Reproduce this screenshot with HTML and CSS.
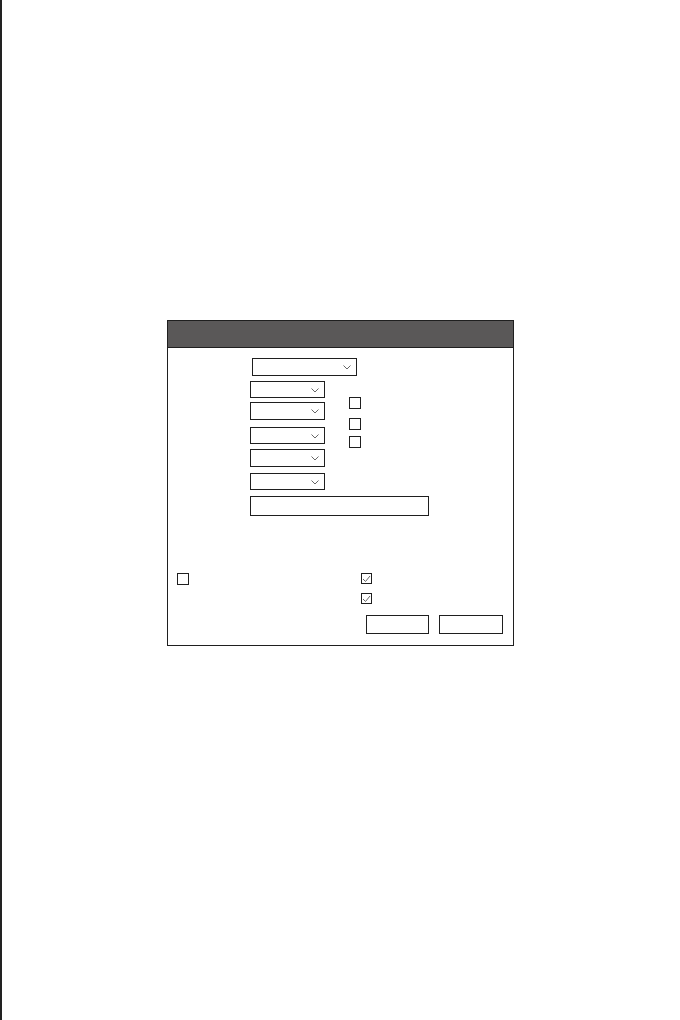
FILE: index.html
```html
<!DOCTYPE html>
<html>
<head>
<meta charset="utf-8">
<link rel="stylesheet" href="styles.css">
</head>
<body>
<div class="page">
  <div class="dialog">
    <div class="titlebar"></div>
    <div class="content">
      <div class="select select-wide">
        <svg class="chev" width="8" height="5" viewBox="0 0 8 5"><polyline points="0.5,0.5 4,4 7.5,0.5"/></svg>
      </div>
      <div class="mid">
        <div class="sel-col">
          <div class="select s1"><svg class="chev" width="8" height="5" viewBox="0 0 8 5"><polyline points="0.5,0.5 4,4 7.5,0.5"/></svg></div>
          <div class="select s2"><svg class="chev" width="8" height="5" viewBox="0 0 8 5"><polyline points="0.5,0.5 4,4 7.5,0.5"/></svg></div>
          <div class="select s3"><svg class="chev" width="8" height="5" viewBox="0 0 8 5"><polyline points="0.5,0.5 4,4 7.5,0.5"/></svg></div>
          <div class="select s4"><svg class="chev" width="8" height="5" viewBox="0 0 8 5"><polyline points="0.5,0.5 4,4 7.5,0.5"/></svg></div>
          <div class="select s5"><svg class="chev" width="8" height="5" viewBox="0 0 8 5"><polyline points="0.5,0.5 4,4 7.5,0.5"/></svg></div>
        </div>
        <div class="chk-col">
          <div class="box c1"></div>
          <div class="box c2"></div>
          <div class="box c3"></div>
        </div>
      </div>
      <div class="text-input"></div>
      <div class="bottom">
        <div class="bottom-left">
          <div class="box"></div>
        </div>
        <div class="bottom-right">
          <div class="box checked"><svg width="9" height="9" viewBox="0 0 9 9"><polyline points="1,5 3.5,7.5 8,2"/></svg></div>
          <div class="box checked second"><svg width="9" height="9" viewBox="0 0 9 9"><polyline points="1,5 3.5,7.5 8,2"/></svg></div>
          <div class="buttons">
            <div class="btn btn-ok"></div>
            <div class="btn btn-cancel"></div>
          </div>
        </div>
      </div>
    </div>
  </div>
</div>
</body>
</html>
```

FILE: styles.css
```css
* { box-sizing: border-box; }
html, body { margin: 0; padding: 0; background: #ffffff; }
body { font-family: "Liberation Sans", Arial, sans-serif; }

.page {
  width: 680px;
  height: 1020px;
  border-left: 2px solid #222222;
  padding-top: 320px;
  padding-left: 165px;
  overflow: hidden;
}

.dialog {
  width: 347px;
  height: 326px;
  border: 1.5px solid #1f1f1f;
  display: flex;
  flex-direction: column;
}

.titlebar {
  height: 27px;
  background: #5a5858;
  border-bottom: 1.5px solid #1f1f1f;
  flex: none;
}

.content {
  flex: 1;
  display: flex;
  flex-direction: column;
  padding-top: 10px;
}

.select {
  position: relative;
  height: 18px;
  border: 1.5px solid #1f1f1f;
  background: #fff;
}
.chev {
  position: absolute;
  right: 5px;
  top: 50%;
  margin-top: -2px;
}
.chev polyline, .checked polyline {
  fill: none;
  stroke: #666;
  stroke-width: 1;
}

.select-wide {
  width: 105px;
  margin-left: 84px;
}

.mid {
  display: flex;
  margin-top: 5px;
  margin-left: 82px;
}
.sel-col {
  display: flex;
  flex-direction: column;
  width: 75px;
}
.sel-col .select { height: 17px; }
.sel-col .s2, .sel-col .s4 { height: 18px; }
.s2 { margin-top: 4px; }
.s3 { margin-top: 7px; }
.s4 { margin-top: 5px; }
.s5 { margin-top: 6px; }

.chk-col {
  display: flex;
  flex-direction: column;
  margin-left: 24px;
}
.box {
  width: 12px;
  height: 12px;
  border: 1.5px solid #1f1f1f;
  background: #fff;
}
.c1 { margin-top: 16px; }
.c2 { margin-top: 9px; }
.c3 { margin-top: 6px; }

.text-input {
  width: 179px;
  height: 20px;
  margin-top: 6px;
  margin-left: 82px;
  border: 1.5px solid #1f1f1f;
}

.bottom {
  display: flex;
  margin-top: 57px;
}
.bottom-left {
  width: 193px;
  padding-left: 9px;
}
.bottom-right {
  display: flex;
  flex-direction: column;
}
.checked {
  width: 11px;
  height: 11px;
  display: flex;
  align-items: center;
  justify-content: center;
}
.checked svg { display: block; }
.second { margin-top: 9px; }

.buttons {
  display: flex;
  gap: 10px;
  margin-top: 11px;
  margin-left: 5px;
}
.btn {
  height: 19px;
  border: 1.5px solid #1f1f1f;
  background: #fff;
}
.btn-ok { width: 63px; }
.btn-cancel { width: 64px; }
```
